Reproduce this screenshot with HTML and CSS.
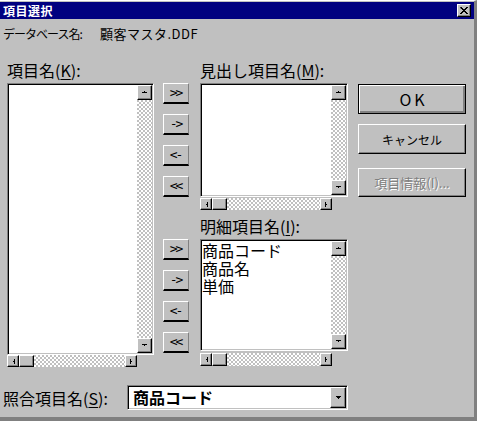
FILE: index.html
```html
<!DOCTYPE html>
<html lang="ja">
<head>
<meta charset="utf-8">
<title>項目選択</title>
<link rel="stylesheet" href="styles.css">
</head>
<body>
<div class="window">
  <div class="titlebar">
    <span class="title">項目選択</span>
    <span class="close"><svg width="8" height="7" viewBox="0 0 8 7"><path d="M0 0h2v1h1v1h2v-1h1v-1h2v1h-1v1h-1v1h-1v1h1v1h1v1h1v1h-2v-1h-1v-1h-2v1h-1v1h-2v-1h1v-1h1v-1h1v-1h-1v-1h-1z" fill="#000"/></svg></span>
  </div>
  <div class="dbline"><span class="dbkey">データベース名:</span><span class="dbname">顧客マスタ.DDF</span></div>
  <div class="main">
    <div class="col col-a">
      <div class="label">項目名(<u>K</u>):</div>
      <div class="listbox lb-fields">
        <div class="listarea"></div>
        <div class="vscroll">
          <div class="sbtn"><svg width="7" height="3" viewBox="0 0 7 3"><path d="M3 0h1v1h-1z M1 1h5v1h-5z" fill="#000"/></svg></div>
          <div class="track"></div>
          <div class="sbtn"><svg width="7" height="3" viewBox="0 0 7 3"><path d="M1 0h5v1h-5z M3 1h1v1h-1z" fill="#000"/></svg></div>
        </div>
      </div>
      <div class="hscroll hs-fields">
        <div class="hbtn"><svg width="3" height="5" viewBox="0 0 3 5"><path d="M2 0h1v5h-1z M1 2h1v1h-1z" fill="#000"/></svg></div>
        <div class="thumb"></div>
        <div class="track"></div>
        <div class="hbtn"><svg width="3" height="5" viewBox="0 0 3 5"><path d="M0 0h1v5h-1z M1 2h1v1h-1z" fill="#000"/></svg></div>
      </div>
    </div>

    <div class="col col-b">
      <div class="movegroup">
        <div class="mbtn">&gt;&gt;</div>
        <div class="mbtn">-&gt;</div>
        <div class="mbtn">&lt;-</div>
        <div class="mbtn">&lt;&lt;</div>
      </div>
      <div class="movegroup second">
        <div class="mbtn">&gt;&gt;</div>
        <div class="mbtn">-&gt;</div>
        <div class="mbtn">&lt;-</div>
        <div class="mbtn">&lt;&lt;</div>
      </div>
    </div>

    <div class="col col-c">
      <div class="label">見出し項目名(<u>M</u>):</div>
      <div class="listbox lb-heading">
        <div class="listarea"></div>
        <div class="vscroll">
          <div class="sbtn"><svg width="7" height="3" viewBox="0 0 7 3"><path d="M3 0h1v1h-1z M1 1h5v1h-5z" fill="#000"/></svg></div>
          <div class="track"></div>
          <div class="sbtn"><svg width="7" height="3" viewBox="0 0 7 3"><path d="M1 0h5v1h-5z M3 1h1v1h-1z" fill="#000"/></svg></div>
        </div>
      </div>
      <div class="hscroll hs-heading">
        <div class="hbtn"><svg width="3" height="5" viewBox="0 0 3 5"><path d="M2 0h1v5h-1z M1 2h1v1h-1z" fill="#000"/></svg></div>
        <div class="thumb"></div>
        <div class="track"></div>
        <div class="hbtn"><svg width="3" height="5" viewBox="0 0 3 5"><path d="M0 0h1v5h-1z M1 2h1v1h-1z" fill="#000"/></svg></div>
      </div>
      <div class="label label-detail">明細項目名(<u>I</u>):</div>
      <div class="listbox lb-detail">
        <div class="listarea">
          <div class="item">商品コード</div>
          <div class="item">商品名</div>
          <div class="item">単価</div>
        </div>
        <div class="vscroll">
          <div class="sbtn"><svg width="7" height="3" viewBox="0 0 7 3"><path d="M3 0h1v1h-1z M1 1h5v1h-5z" fill="#000"/></svg></div>
          <div class="track"></div>
          <div class="sbtn"><svg width="7" height="3" viewBox="0 0 7 3"><path d="M1 0h5v1h-5z M3 1h1v1h-1z" fill="#000"/></svg></div>
        </div>
      </div>
      <div class="hscroll hs-detail">
        <div class="hbtn"><svg width="3" height="5" viewBox="0 0 3 5"><path d="M2 0h1v5h-1z M1 2h1v1h-1z" fill="#000"/></svg></div>
        <div class="thumb"></div>
        <div class="track"></div>
        <div class="hbtn"><svg width="3" height="5" viewBox="0 0 3 5"><path d="M0 0h1v5h-1z M1 2h1v1h-1z" fill="#000"/></svg></div>
      </div>
    </div>

    <div class="col col-d">
      <div class="btn default ok">OK</div>
      <div class="btn cancel">キャンセル</div>
      <div class="btn disabled info">項目情報(I)...</div>
    </div>
  </div>

  <div class="keyrow">
    <div class="keylabel">照合項目名(<u>S</u>):</div>
    <div class="combo">
      <div class="value">商品コード</div>
      <div class="drop"><svg width="5" height="3" viewBox="0 0 5 3"><path d="M0 0h5v1h-5z M1 1h3v1h-3z M2 2h1v1h-1z" fill="#000"/></svg></div>
    </div>
  </div>
</div>
</body>
</html>
```
FILE: styles.css
```css
* { box-sizing: border-box; }
html, body { margin: 0; padding: 0; }
body {
  width: 477px;
  height: 421px;
  background: #c0c0c0;
  font-family: "Noto Sans CJK JP", "Liberation Sans", sans-serif;
  color: #000;
  overflow: hidden;
}
u { text-decoration-thickness: 1px; text-underline-offset: 2px; }

.window {
  width: 477px;
  height: 421px;
  border-top: 1px solid #fff;
  border-right: 3px solid #808080;
  border-bottom: 4px solid #808080;
  padding-top: 1px;
  display: flex;
  flex-direction: column;
}

.titlebar {
  height: 17px;
  background: #000080;
  display: flex;
  align-items: center;
  justify-content: space-between;
  padding: 0 3px 0 3px;
}
.title {
  color: #fff;
  font-size: 12px;
  font-weight: bold;
  line-height: 17px;
  letter-spacing: 0.5px;
}
.close {
  width: 14px;
  height: 13px;
  background: #c0c0c0;
  border: 1px solid;
  border-color: #fff #000 #000 #fff;
  box-shadow: inset -1px -1px #808080;
  display: flex;
  align-items: center;
  justify-content: center;
}
.close svg { display: block; }

.dbline {
  height: 41px;
  padding: 7px 0 0 3px;
  font-size: 12px;
  line-height: 16px;
  display: flex;
  white-space: nowrap;
}
.dbkey { width: 97px; letter-spacing: -1px; }
.dbname { font-size: 13px; letter-spacing: 0.5px; }

.main {
  display: flex;
  padding-left: 7px;
  height: 307px;
}
.col { display: flex; flex-direction: column; }
.col-a { width: 147px; }
.col-b { width: 26px; margin-left: 9px; padding-top: 23px; }
.col-c { width: 148px; margin-left: 11px; }
.col-d { width: 108px; margin-left: 10px; padding-top: 24px; }

.label {
  height: 23px;
  font-size: 16px;
  line-height: 20px;
  white-space: nowrap;
}
.label-detail { height: 29px; padding-top: 6px; }

.listbox {
  display: flex;
  border: 1px solid;
  border-color: #808080 #fff #fff #808080;
  box-shadow: inset 1px 1px #000, inset -1px -1px #c0c0c0;
  padding: 1px;
  background: #fff;
}
.lb-fields { height: 272px; }
.lb-heading { height: 114px; }
.lb-detail { height: 112px; }

.listarea {
  flex: 1;
  background: #fff;
  font-size: 16px;
  line-height: 18px;
  white-space: nowrap;
}
.item { height: 18px; }

.vscroll {
  width: 15px;
  display: flex;
  flex-direction: column;
}
.sbtn, .hbtn, .thumb, .drop {
  background: #c0c0c0;
  border: 1px solid;
  border-color: #fff #000 #000 #fff;
  box-shadow: inset -1px -1px #808080;
  display: flex;
  align-items: center;
  justify-content: center;
}
.sbtn { height: 15px; }
.sbtn svg, .hbtn svg, .drop svg { display: block; }

.track {
  flex: 1;
  background-color: #c0c0c0;
  background-image: repeating-conic-gradient(#fff 0 25%, #c0c0c0 0 50%);
  background-size: 4px 4px;
}

.hscroll {
  display: flex;
  height: 12px;
}
.hs-fields { width: 130px; }
.hs-heading { width: 132px; margin-top: 1px; }
.hs-detail { width: 132px; margin-top: 2px; height: 13px; }
.hbtn { width: 12px; }
.thumb { width: 15px; }

.movegroup {
  display: flex;
  flex-direction: column;
  gap: 10px;
}
.movegroup.second { margin-top: 42px; }
.mbtn {
  height: 21px;
  background: #c0c0c0;
  border-style: solid;
  border-width: 1px 1px 2px 1px;
  border-color: #fff #808080 #000 #fff;
  font-family: "DejaVu Sans Mono", monospace;
  font-size: 13px;
  line-height: 17px;
  text-align: center;
  letter-spacing: -2px;
  padding-right: 1px;
}

.btn {
  height: 30px;
  background: #c0c0c0;
  border: 1px solid;
  border-color: #fff #000 #000 #fff;
  box-shadow: inset -1px -1px #808080;
  display: flex;
  align-items: center;
  justify-content: center;
  white-space: nowrap;
}
.btn.default {
  border-color: #000;
  box-shadow: inset 1px 1px #fff, inset -1px -1px #808080, inset -2px -2px #808080;
}
.ok { font-size: 16px; letter-spacing: 3px; padding-left: 3px; }
.cancel { margin-top: 10px; font-size: 12px; }
.info {
  margin-top: 14px;
  height: 29px;
  font-size: 13px;
  color: #808080;
  text-shadow: 1px 1px #fff;
}

.keyrow {
  display: flex;
  align-items: center;
  margin-top: 18px;
  height: 25px;
  padding-left: 3px;
}
.keylabel {
  width: 124px;
  font-size: 16px;
  line-height: 20px;
  white-space: nowrap;
}
.combo {
  width: 221px;
  height: 25px;
  display: flex;
  border: 1px solid;
  border-color: #808080 #fff #fff #808080;
  box-shadow: inset 1px 1px #000, inset -1px -1px #c0c0c0;
  padding: 1px;
  background: #fff;
}
.combo .value {
  flex: 1;
  padding-left: 4px;
  font-size: 16px;
  font-weight: bold;
  line-height: 20px;
}
.drop { width: 16px; }
```
